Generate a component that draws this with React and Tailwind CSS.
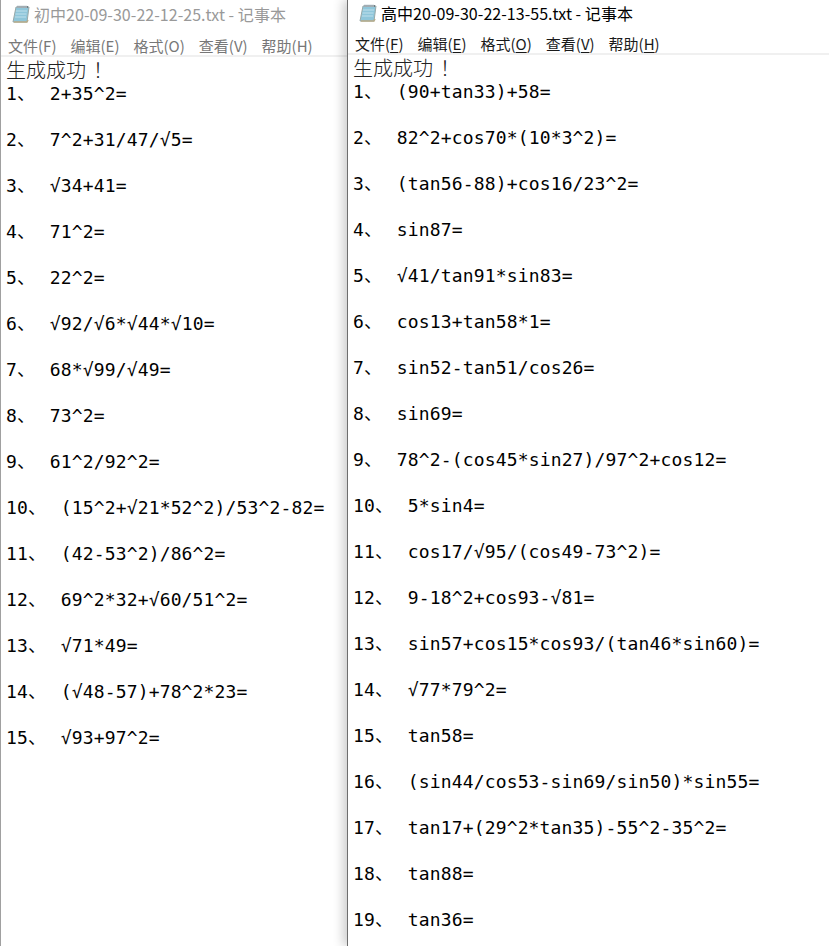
const leftRows = [
  ["1、", "2+35^2="],
  ["2、", "7^2+31/47/√5="],
  ["3、", "√34+41="],
  ["4、", "71^2="],
  ["5、", "22^2="],
  ["6、", "√92/√6*√44*√10="],
  ["7、", "68*√99/√49="],
  ["8、", "73^2="],
  ["9、", "61^2/92^2="],
  ["10、", "(15^2+√21*52^2)/53^2-82="],
  ["11、", "(42-53^2)/86^2="],
  ["12、", "69^2*32+√60/51^2="],
  ["13、", "√71*49="],
  ["14、", "(√48-57)+78^2*23="],
  ["15、", "√93+97^2="],
];

const rightRows = [
  ["1、", "(90+tan33)+58="],
  ["2、", "82^2+cos70*(10*3^2)="],
  ["3、", "(tan56-88)+cos16/23^2="],
  ["4、", "sin87="],
  ["5、", "√41/tan91*sin83="],
  ["6、", "cos13+tan58*1="],
  ["7、", "sin52-tan51/cos26="],
  ["8、", "sin69="],
  ["9、", "78^2-(cos45*sin27)/97^2+cos12="],
  ["10、", "5*sin4="],
  ["11、", "cos17/√95/(cos49-73^2)="],
  ["12、", "9-18^2+cos93-√81="],
  ["13、", "sin57+cos15*cos93/(tan46*sin60)="],
  ["14、", "√77*79^2="],
  ["15、", "tan58="],
  ["16、", "(sin44/cos53-sin69/sin50)*sin55="],
  ["17、", "tan17+(29^2*tan35)-55^2-35^2="],
  ["18、", "tan88="],
  ["19、", "tan36="],
];

const NotepadIcon = () => (
  <svg width="20" height="20" viewBox="0 0 20 20" className="shrink-0">
    <path d="M5 3h13l-2 15H2z" fill="#8fc6da" stroke="#9aa9a8" />
    <path d="M3 18h13l1-2" fill="none" stroke="#b8ad8c" strokeWidth="1.5" />
    <path d="M5 7h11M4.500 10h11M4 13h11" stroke="#bfe0ec" />
    <path d="M6 2h11v2H6z" fill="#6f7d84" />
    <path d="M7 1v3M9 1v3M11 1v3M13 1v3M15 1v3" stroke="#d5dde1" />
  </svg>
);

const Menu = ({ label, hotkey, active }) => (
  <span className="whitespace-pre">
    {label}(
    <span className={active ? "underline underline-offset-2" : ""}>{hotkey}</span>)
  </span>
);

const NotepadWindow = ({ title, rows, active, className }) => (
  <section className={`flex h-full flex-col overflow-hidden bg-white ${className}`}>
    <header className={`flex shrink-0 items-center gap-[3px] pb-[2px] pl-[10px] text-[16px] ${active ? "h-[28px] text-black" : "h-[30px] text-[#999999]"}`}>
      <NotepadIcon />
      <span className="whitespace-nowrap tracking-[0.04px]">{title}</span>
    </header>
    <nav className={`flex h-[27px] shrink-0 items-center gap-[14px] border-b-2 border-[#f0f0f0] pl-[7px] pt-[7px] text-[15px] ${active ? "text-[#1a1a1a]" : "text-[#777777]"}`}>
      <Menu label="文件" hotkey="F" active={active} />
      <Menu label="编辑" hotkey="E" active={active} />
      <Menu label="格式" hotkey="O" active={active} />
      <Menu label="查看" hotkey="V" active={active} />
      <Menu label="帮助" hotkey="H" active={active} />
    </nav>
    <div className="pl-[5px] pt-[2px] text-black">
      <div className="h-[23px] font-['Noto_Sans_CJK_SC',serif] text-[20px] font-light leading-[22px] text-[#222222]">
        生成成功<span className="ml-[7px]">！</span>
      </div>
      {rows.map(([num, expr]) => (
        <div key={num} className="flex h-[46px] font-['DejaVu_Sans_Mono','Noto_Sans_CJK_SC',monospace] text-[18px] leading-[24px] tracking-[0.16px]">
          <span className="whitespace-pre">{num}</span>
          <span className="ml-[14.5px] whitespace-pre">{expr}</span>
        </div>
      ))}
    </div>
  </section>
);

export default function App() {
  return (
    <div className="flex h-[946px] w-[829px] overflow-hidden bg-white font-['Noto_Sans_CJK_SC','Liberation_Sans',sans-serif]">
      <NotepadWindow title="初中20-09-30-22-12-25.txt - 记事本" rows={leftRows} className="w-[347px] shrink-0 border-l border-[#a0a0a0]" />
      <NotepadWindow title="高中20-09-30-22-13-55.txt - 记事本" rows={rightRows} active className="flex-1 border-l border-[#6e6e6e] shadow-[-4px_0_10px_rgba(0,0,0,0.2)]" />
    </div>
  );
}
